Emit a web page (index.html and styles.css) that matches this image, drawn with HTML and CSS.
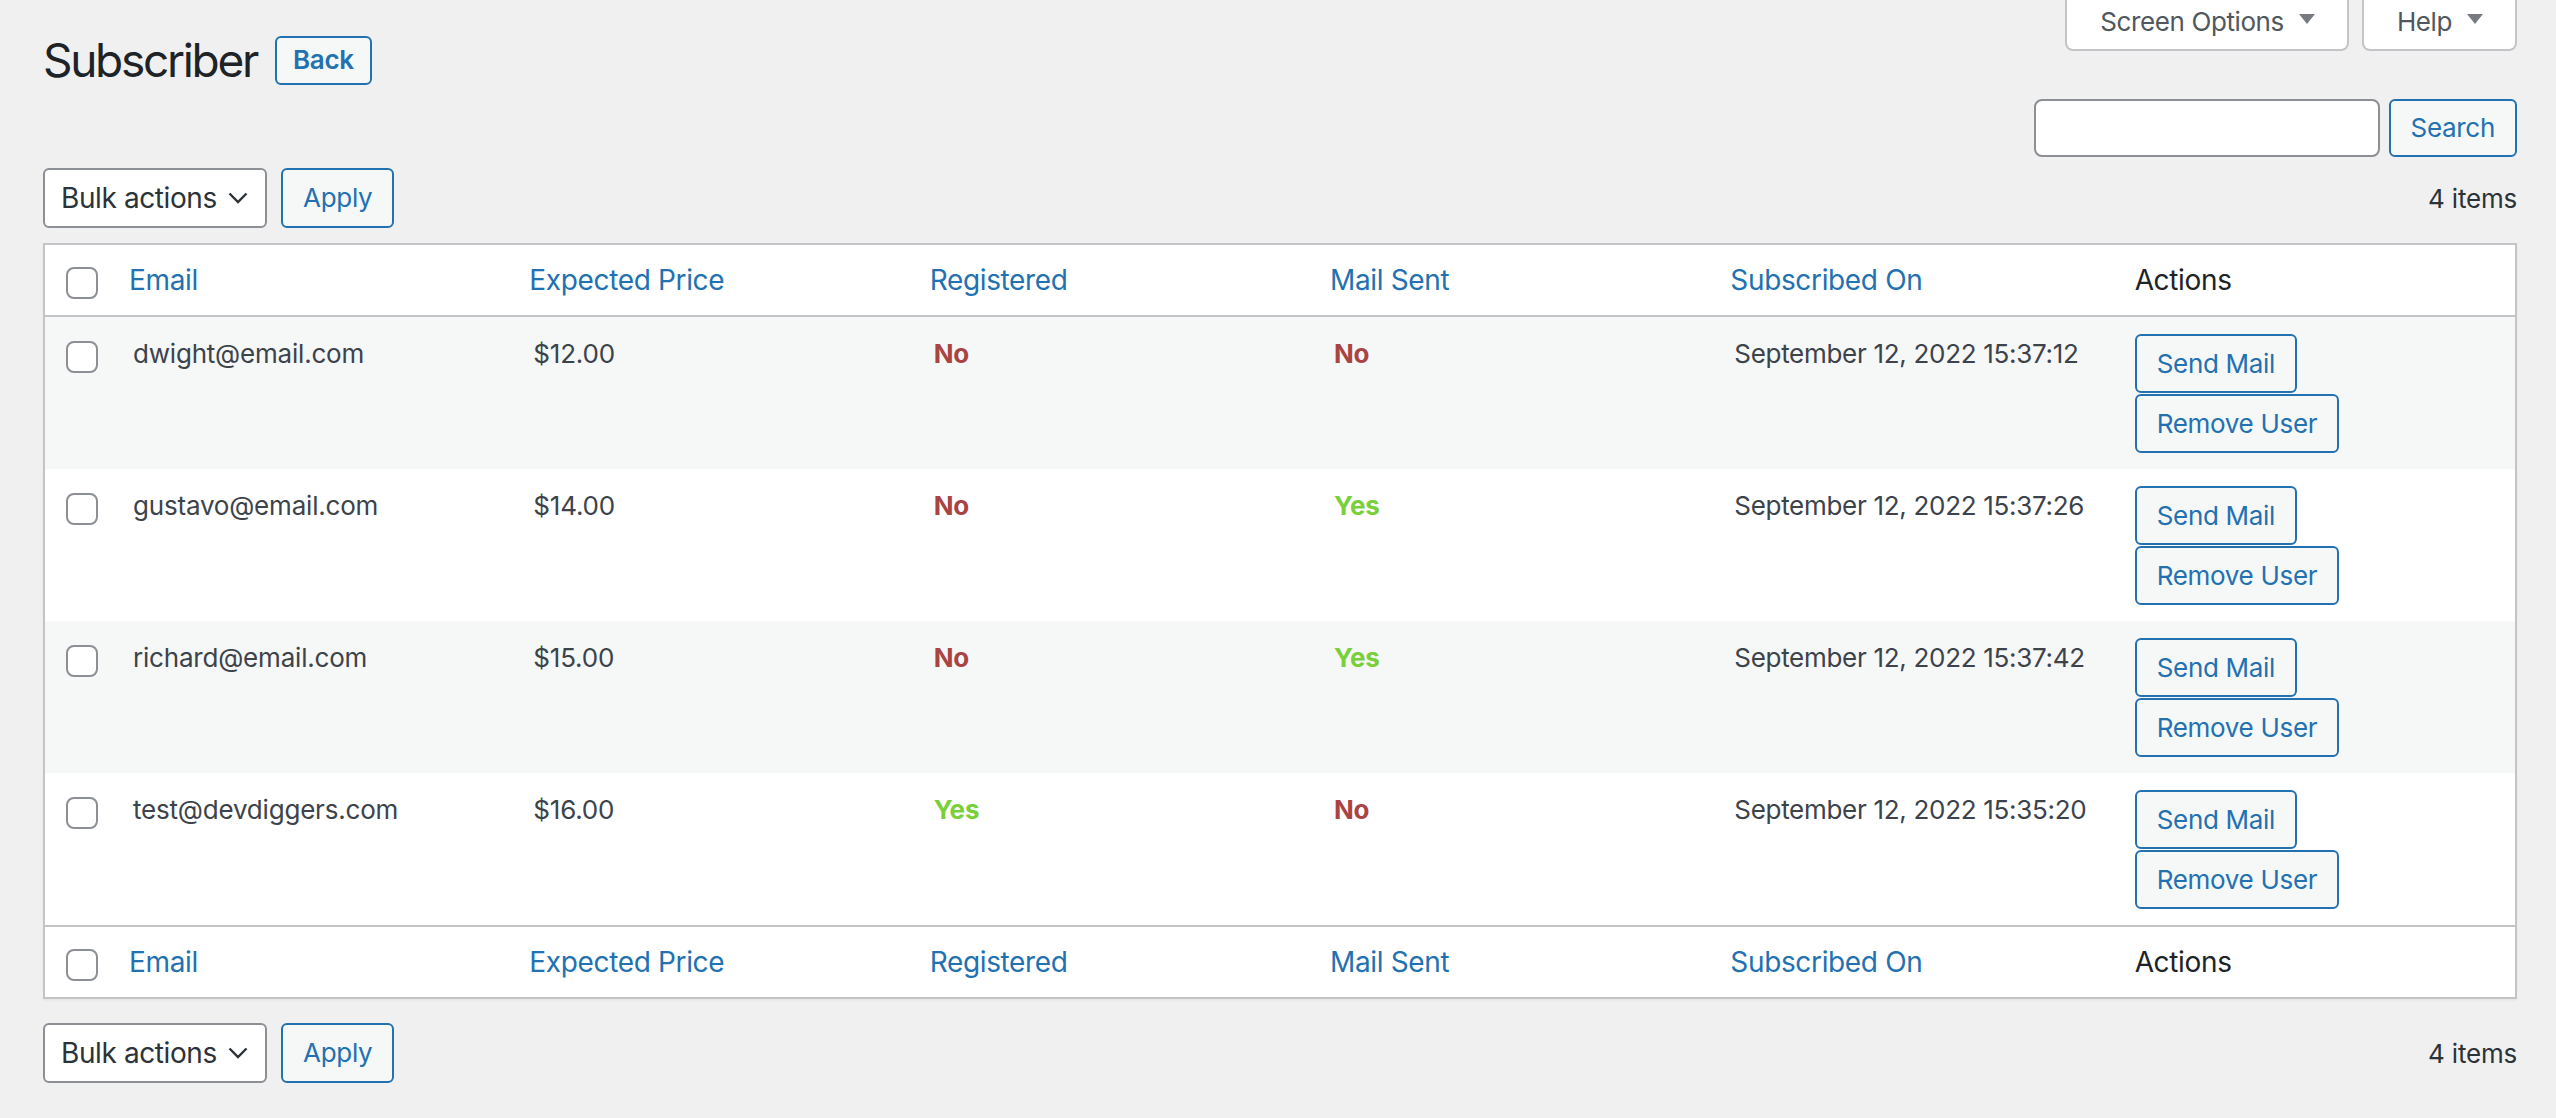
FILE: index.html
```html
<!DOCTYPE html>
<html lang="en">
<head>
<meta charset="utf-8">
<title>Subscriber</title>
<link rel="stylesheet" href="styles.css">
</head>
<body>
<div class="wrap">
  <div class="top">
    <div class="title-row">
      <h1 class="page-title">Subscriber</h1>
      <a class="btn title-action" href="#">Back</a>
    </div>
    <div class="meta-links">
      <button class="meta-btn" type="button">Screen Options<svg class="caret" viewBox="0 0 16 10" width="16" height="10"><path d="M0 0h16L8 10z"/></svg></button>
      <button class="meta-btn" type="button">Help<svg class="caret" viewBox="0 0 16 10" width="16" height="10"><path d="M0 0h16L8 10z"/></svg></button>
    </div>
  </div>

  <div class="search-row">
    <input class="search-input" type="search" aria-label="Search">
    <button class="btn" type="button">Search</button>
  </div>

  <div class="tablenav">
    <div class="bulk">
      <div class="select">Bulk actions<svg class="chev" viewBox="0 0 20 12" width="20" height="12"><path d="M1.5 1.5l8.5 8.5 8.5-8.5" fill="none" stroke="#2c3338" stroke-width="2.4"/></svg></div>
      <button class="btn" type="button">Apply</button>
    </div>
    <div class="count">4 items</div>
  </div>

  <table class="list">
    <colgroup>
      <col class="c-check"><col><col><col><col><col><col>
    </colgroup>
    <thead>
      <tr>
        <td class="check"><input type="checkbox" class="cb"></td>
        <th class="sortable"><a href="#">Email</a></th>
        <th class="sortable"><a href="#">Expected Price</a></th>
        <th class="sortable"><a href="#">Registered</a></th>
        <th class="sortable"><a href="#">Mail Sent</a></th>
        <th class="sortable"><a href="#">Subscribed On</a></th>
        <th class="plain">Actions</th>
      </tr>
    </thead>
    <tbody>
      <tr class="alt">
        <td class="check"><input type="checkbox" class="cb"></td>
        <td>dwight@email.com</td>
        <td>$12.00</td>
        <td><b class="no">No</b></td>
        <td><b class="no">No</b></td>
        <td class="date">September 12, 2022 15:37:12</td>
        <td><div class="acts"><a class="btn sm" href="#">Send Mail</a><a class="btn sm" href="#">Remove User</a></div></td>
      </tr>
      <tr>
        <td class="check"><input type="checkbox" class="cb"></td>
        <td>gustavo@email.com</td>
        <td>$14.00</td>
        <td><b class="no">No</b></td>
        <td><b class="yes">Yes</b></td>
        <td class="date">September 12, 2022 15:37:26</td>
        <td><div class="acts"><a class="btn sm" href="#">Send Mail</a><a class="btn sm" href="#">Remove User</a></div></td>
      </tr>
      <tr class="alt">
        <td class="check"><input type="checkbox" class="cb"></td>
        <td>richard@email.com</td>
        <td>$15.00</td>
        <td><b class="no">No</b></td>
        <td><b class="yes">Yes</b></td>
        <td class="date">September 12, 2022 15:37:42</td>
        <td><div class="acts"><a class="btn sm" href="#">Send Mail</a><a class="btn sm" href="#">Remove User</a></div></td>
      </tr>
      <tr>
        <td class="check"><input type="checkbox" class="cb"></td>
        <td>test@devdiggers.com</td>
        <td>$16.00</td>
        <td><b class="yes">Yes</b></td>
        <td><b class="no">No</b></td>
        <td class="date">September 12, 2022 15:35:20</td>
        <td><div class="acts"><a class="btn sm" href="#">Send Mail</a><a class="btn sm" href="#">Remove User</a></div></td>
      </tr>
    </tbody>
    <tfoot>
      <tr>
        <td class="check"><input type="checkbox" class="cb"></td>
        <th class="sortable"><a href="#">Email</a></th>
        <th class="sortable"><a href="#">Expected Price</a></th>
        <th class="sortable"><a href="#">Registered</a></th>
        <th class="sortable"><a href="#">Mail Sent</a></th>
        <th class="sortable"><a href="#">Subscribed On</a></th>
        <th class="plain">Actions</th>
      </tr>
    </tfoot>
  </table>

  <div class="tablenav bottom">
    <div class="bulk">
      <div class="select">Bulk actions<svg class="chev" viewBox="0 0 20 12" width="20" height="12"><path d="M1.5 1.5l8.5 8.5 8.5-8.5" fill="none" stroke="#2c3338" stroke-width="2.4"/></svg></div>
      <button class="btn" type="button">Apply</button>
    </div>
    <div class="count">4 items</div>
  </div>
</div>
</body>
</html>
```

FILE: styles.css
```css
* { box-sizing: border-box; }

html, body {
  margin: 0;
  padding: 0;
  background: #f0f0f1;
}

body {
  font-family: Inter, "Liberation Sans", sans-serif;
  font-size: 26px;
  letter-spacing: -0.2px;
  color: #3c434a;
}

.wrap {
  padding: 0 39px 0 43px;
}

/* top area */
.top {
  display: flex;
  justify-content: space-between;
  align-items: flex-start;
}

.title-row {
  display: flex;
  align-items: center;
  padding-top: 30px;
}

.page-title {
  margin: 0;
  font-size: 46px;
  line-height: 60px;
  font-weight: 400;
  color: #1d2327;
  letter-spacing: -2.3px;
}

.btn {
  display: inline-flex;
  align-items: center;
  justify-content: center;
  height: 60px;
  padding: 0 20px;
  border: 2px solid #2271b1;
  border-radius: 6px;
  background: #f6f7f7;
  color: #2271b1;
  font-family: inherit;
  font-size: 26px;
  letter-spacing: -0.3px;
  line-height: 1;
  text-decoration: none;
  white-space: nowrap;
  cursor: pointer;
}

.title-action {
  height: 49px;
  margin-left: 18px;
  padding: 0 16px;
  font-weight: 600;
}

.meta-links {
  display: flex;
  gap: 13px;
}

.meta-btn {
  display: flex;
  align-items: center;
  height: 51px;
  padding: 0 32px 6px 33px;
  border: 2px solid #c3c4c7;
  border-top: 0;
  border-radius: 0 0 8px 8px;
  background: #fff;
  color: #50575e;
  font-family: inherit;
  font-size: 26px;
  letter-spacing: -0.4px;
}

.caret {
  margin-left: 15px;
  margin-top: -6px;
  fill: #787c82;
}

/* search */
.search-row {
  display: flex;
  justify-content: flex-end;
  gap: 9px;
  margin-top: 9px;
}

.search-input {
  width: 346px;
  height: 58px;
  border: 2px solid #8c8f94;
  border-radius: 8px;
  background: #fff;
  margin: 0;
}

.search-row .btn {
  height: 58px;
}

/* table nav */
.tablenav {
  display: flex;
  justify-content: space-between;
  align-items: center;
  margin: 11px 0 15px;
}

.tablenav.bottom {
  margin: 24px 0 0;
}

.bulk {
  display: flex;
  gap: 14px;
}

.select {
  display: flex;
  align-items: center;
  justify-content: space-between;
  width: 224px;
  height: 60px;
  padding: 0 17px 0 16px;
  border: 2px solid #8c8f94;
  border-radius: 6px;
  background: #fff;
  color: #2c3338;
  font-size: 28px;
  letter-spacing: -0.4px;
}

.count {
  color: #2c3338;
  font-size: 26px;
}

/* list table */
.list {
  width: 100%;
  table-layout: fixed;
  border-collapse: separate;
  border-spacing: 0;
  border: 2px solid #c3c4c7;
  background: #fff;
  box-shadow: 0 2px 2px rgba(0, 0, 0, 0.04);
}

.c-check { width: 68px; }

.list thead th,
.list thead td {
  border-bottom: 2px solid #c3c4c7;
}

.list tfoot th,
.list tfoot td {
  border-top: 2px solid #c3c4c7;
}

.list th {
  text-align: left;
  font-weight: 400;
  font-size: 28px;
  line-height: 38px;
  letter-spacing: -0.35px;
  padding: 0;
}

.list th.sortable a {
  display: block;
  padding: 16px;
  color: #2271b1;
  text-decoration: none;
}

.list th.plain {
  padding: 16px 20px;
  color: #1d2327;
}

.list thead td.check,
.list tfoot td.check {
  vertical-align: top;
  padding: 22px 0 0 21px;
}

.list tbody td {
  vertical-align: top;
  padding: 17px 20px 16px;
  line-height: 40px;
  font-size: 26px;
  color: #3c434a;
  white-space: nowrap;
}

.list tbody td.date {
  letter-spacing: -0.3px;
}

.list tbody td.check {
  padding: 24px 0 0 21px;
}

.list tbody tr.alt td {
  background: #f6f7f7;
}

.cb {
  -webkit-appearance: none;
  appearance: none;
  display: block;
  width: 32px;
  height: 32px;
  margin: 0;
  border: 2px solid #8c8f94;
  border-radius: 8px;
  background: #fff;
}

.no { color: #aa4343; font-weight: 700; }
.yes { color: #7ad03a; font-weight: 700; }

.acts {
  display: flex;
  flex-direction: column;
  align-items: flex-start;
  gap: 1px;
}

.btn.sm {
  height: 59px;
}
```
